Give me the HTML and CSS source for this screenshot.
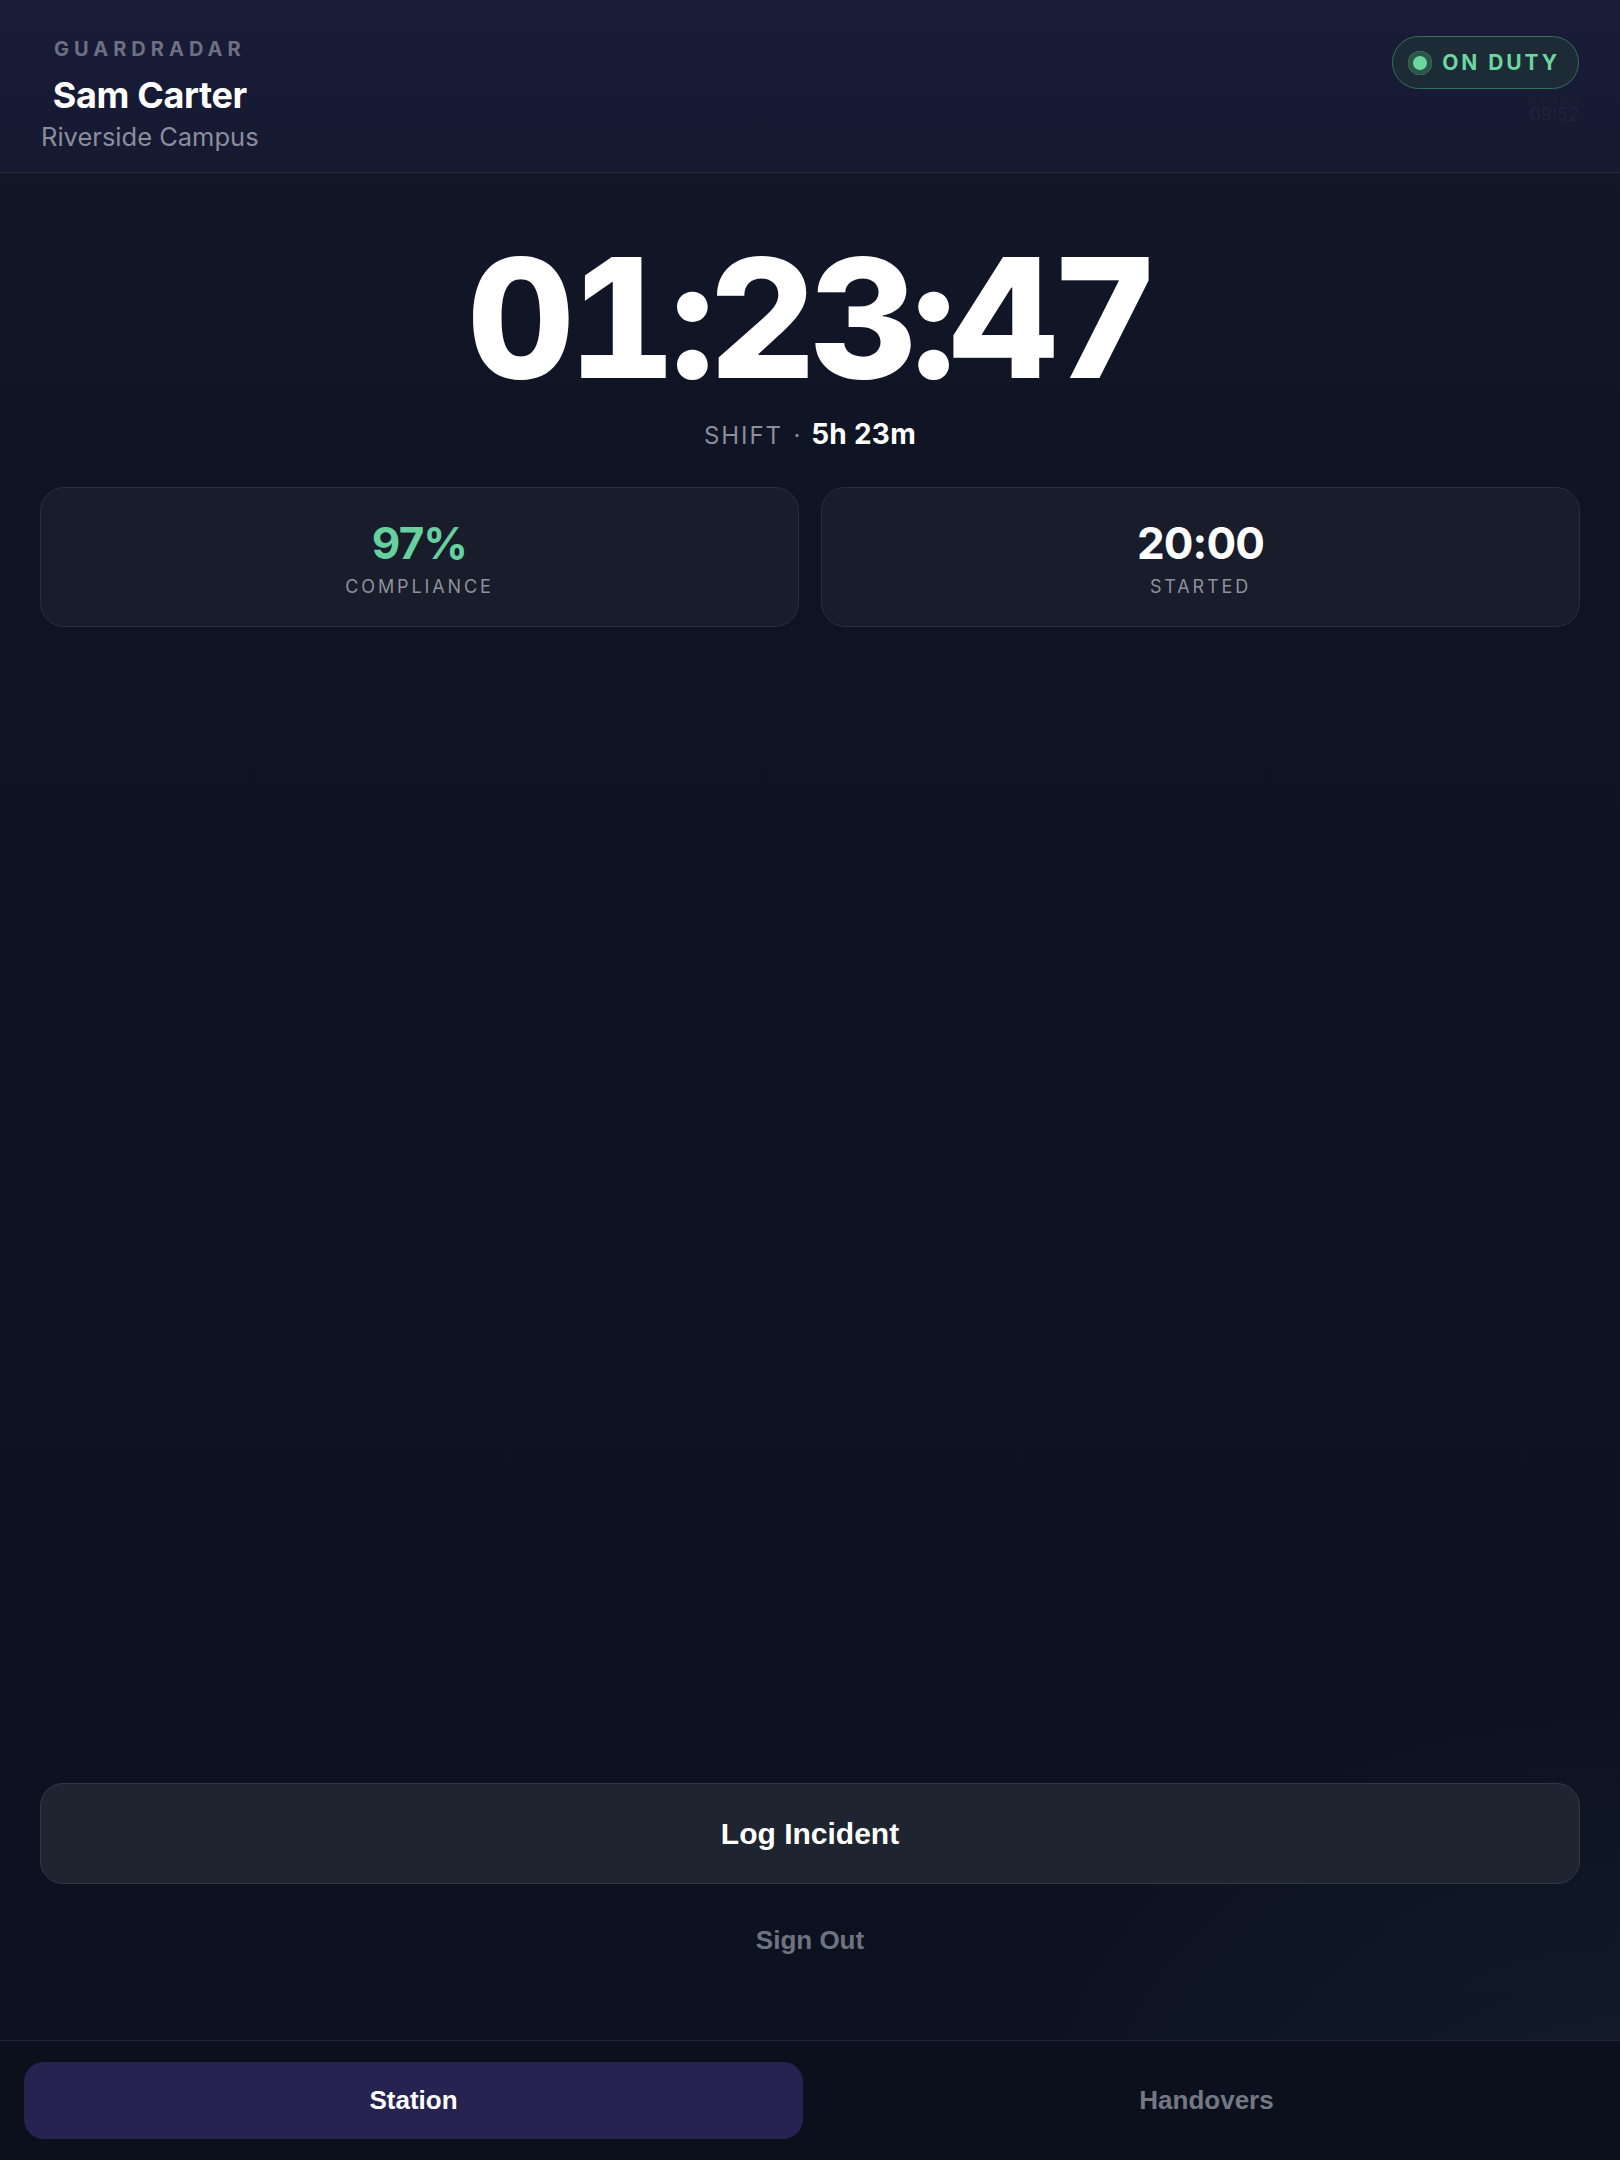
FILE: index.html
```html
<!DOCTYPE html>
<html lang="en">
<head>
<title>GuardRadar - Station</title>
<meta charset="utf-8">
<meta name="viewport" content="width=device-width, initial-scale=1">
<link rel="stylesheet" href="styles.css">
</head>
<body>
<div class="app">

  <!-- TOP BAR -->
  <header class="topbar">
    <div class="who">
      <div class="brand">GUARDRADAR</div>
      <div class="guard-name">Sam Carter</div>
      <div class="site">Riverside Campus</div>
    </div>
    <div class="status">
      <div class="duty-pill">
        <span class="duty-dot"></span>
        <span class="duty-text">ON DUTY</span>
      </div>
      <div class="debug">2769s</div>
      <div class="debug clock">09:52</div>
    </div>
  </header>

  <!-- MAIN STATION VIEW -->
  <main class="station">
    <div class="timer">01:23:47</div>
    <div class="shift">SHIFT <span class="sep">&middot;</span> <strong>5h 23m</strong></div>

    <div class="stats">
      <div class="stat">
        <div class="stat-value green">97%</div>
        <div class="stat-label">COMPLIANCE</div>
      </div>
      <div class="stat">
        <div class="stat-value">20:00</div>
        <div class="stat-label">STARTED</div>
      </div>
    </div>

    <div class="spacer"></div>

    <div class="actions">
      <button type="button" class="btn-log">Log Incident</button>
      <button type="button" class="btn-signout">Sign Out</button>
    </div>
  </main>

  <!-- BOTTOM TABS -->
  <nav class="tabs">
    <button type="button" class="tab active">Station</button>
    <button type="button" class="tab">Handovers</button>
  </nav>

</div>
</body>
</html>
```

FILE: styles.css
```css
* {
  box-sizing: border-box;
}

html, body {
  margin: 0;
  height: 100%;
}

body {
  font-family: Inter, "Noto Sans", sans-serif;
  color: #ffffff;
  background:
    radial-gradient(ellipse 900px 650px at 100% 100%, rgba(22, 42, 48, 0.55), rgba(12, 17, 32, 0) 70%),
    linear-gradient(180deg, #141829 0%, #0f1424 25%, #0c1120 100%);
}

.app {
  display: flex;
  flex-direction: column;
  min-height: 100vh;
}

/* Header */
.topbar {
  display: flex;
  justify-content: space-between;
  align-items: flex-start;
  padding: 36px 41px 20px 41px;
  border-bottom: 1px solid #262a3b;
  background: linear-gradient(180deg, #1a1c38 0%, #151931 100%);
}

.who {
  text-align: center;
}

.brand {
  margin-top: 1px;
  font-size: 20px;
  line-height: 24px;
  font-weight: 700;
  letter-spacing: 0.25em;
  color: #6c7083;
}

.guard-name {
  margin-top: 13px;
  font-size: 36px;
  line-height: 43px;
  font-weight: 700;
  letter-spacing: -0.01em;
}

.site {
  margin-top: 5px;
  font-size: 25.5px;
  line-height: 30px;
  color: #8a8e9c;
}

.status {
  display: flex;
  flex-direction: column;
  align-items: flex-end;
}

.duty-pill {
  display: flex;
  align-items: center;
  height: 53px;
  padding: 0 18px 0 15px;
  border: 1.5px solid #327259;
  border-radius: 27px;
  background: #1d2b37;
}

.duty-dot {
  width: 24px;
  height: 24px;
  border-radius: 50%;
  background: #6ad6a0;
  box-shadow: inset 0 0 0 5px #2c5648;
  margin-right: 10px;
}

.duty-text {
  font-size: 21px;
  font-weight: 700;
  letter-spacing: 0.14em;
  color: #6ad6a0;
}

.debug {
  font-size: 18px;
  line-height: 17px;
  color: #1b1f33;
}

.debug:first-of-type {
  margin-top: 4px;
}

.debug.clock {
  color: #20243a;
}

/* Station */
.station {
  flex: 1;
  display: flex;
  flex-direction: column;
  padding: 62px 40px 69px 40px;
}

.timer {
  text-align: center;
  font-size: 166px;
  line-height: 166px;
  font-weight: 800;
  font-variant-numeric: tabular-nums;
  letter-spacing: -0.035em;
}

.shift {
  margin-top: 18px;
  text-align: center;
  font-size: 24px;
  line-height: 30px;
  letter-spacing: 0.08em;
  color: #8a8e9b;
}

.shift .sep {
  margin: 0 2px;
  letter-spacing: 0;
}

.shift strong {
  font-size: 28px;
  font-weight: 700;
  letter-spacing: 0.01em;
  color: #ffffff;
}

.stats {
  display: grid;
  grid-template-columns: 1fr 1fr;
  gap: 22px;
  margin-top: 36px;
}

.stat {
  text-align: center;
  padding: 31px 0 27px 0;
  border: 1.5px solid #2a2e3c;
  border-radius: 24px;
  background: #181c2b;
}

.stat-value {
  font-size: 44px;
  line-height: 48px;
  font-weight: 700;
  letter-spacing: -0.02em;
}

.stat-value.green {
  color: #66d19e;
}

.stat-label {
  margin-top: 8px;
  font-size: 18px;
  line-height: 24px;
  letter-spacing: 0.16em;
  color: #8e929e;
}

.spacer {
  flex: 1;
}

.actions {
  display: flex;
  flex-direction: column;
  align-items: stretch;
}

.btn-log {
  height: 101px;
  border: 1.5px solid #343846;
  border-radius: 23px;
  background: #1f2431;
  color: #ffffff;
  font-family: "Liberation Sans", Arial, sans-serif;
  font-size: 30px;
  font-weight: 700;
  cursor: pointer;
}

.btn-signout {
  margin-top: 25px;
  padding: 16px 0;
  border: none;
  background: none;
  color: #6e7380;
  font-family: "Liberation Sans", Arial, sans-serif;
  font-size: 26px;
  line-height: 30px;
  font-weight: 700;
  cursor: pointer;
}

/* Bottom tabs */
.tabs {
  display: grid;
  grid-template-columns: 1fr 1fr;
  gap: 14px;
  padding: 21px 24px;
  border-top: 1px solid #1f2331;
  background: #0b101c;
}

.tab {
  height: 77px;
  border: none;
  border-radius: 20px;
  background: transparent;
  color: #737885;
  font-family: "Liberation Sans", Arial, sans-serif;
  font-size: 26px;
  font-weight: 700;
  cursor: pointer;
}

.tab.active {
  background: #262350;
  color: #ffffff;
}
```
